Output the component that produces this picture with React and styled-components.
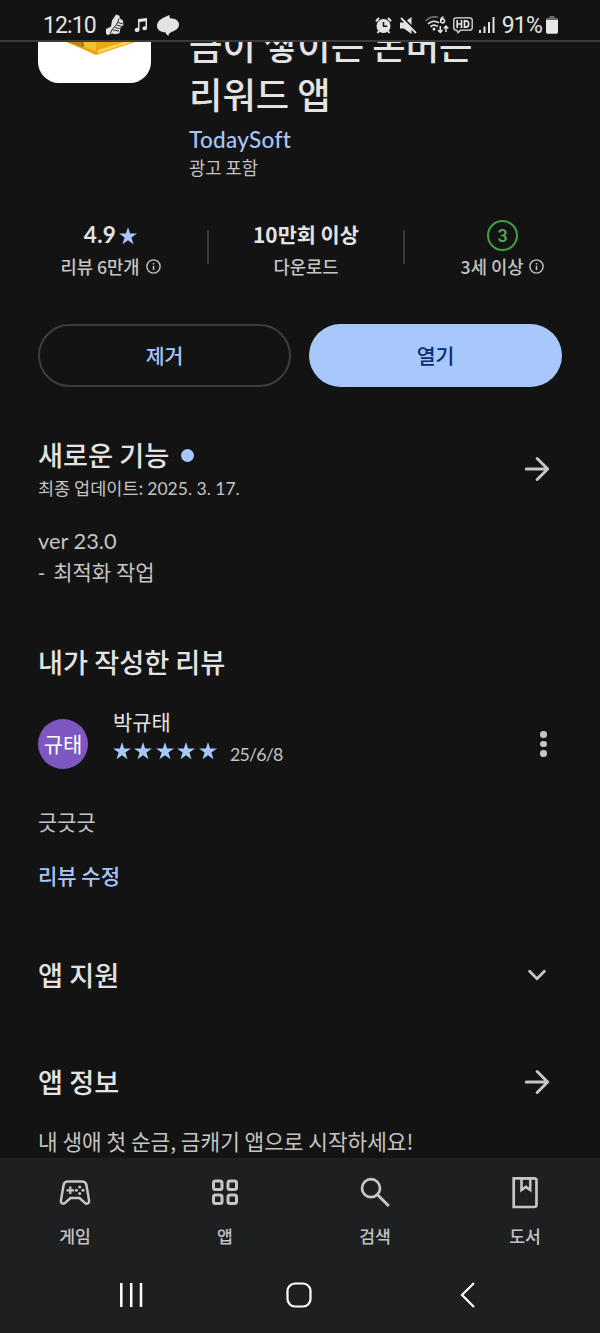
import React from 'react';
import styled, { createGlobalStyle } from 'styled-components';

const GlobalStyle = createGlobalStyle`
    * {
        box-sizing: border-box;
    }

    body {
        margin: 0;
        background: #131313;
    }
`;

const Screen = styled.div`
    display: flex;
    flex-direction: column;
    width: 600px;
    height: 1333px;
    overflow: hidden;
    background: #131313;
    color: #e3e3e3;
    font-family: 'Noto Sans CJK KR', sans-serif;
`;

const StatusBar = styled.header`
    display: flex;
    justify-content: space-between;
    flex: none;
    height: 42px;
    padding: 8px 42px 0 43px;
    border-bottom: 2px solid #3b3b3b;
    font-family: Roboto, sans-serif;
    font-size: 23px;
    line-height: 34px;
`;

const StatusGroup = styled.div`
    display: flex;
    align-items: center;
    height: 34px;
    gap: ${({ $gap }) => $gap || 0}px;

    svg {
        display: block;
        flex: none;
    }
`;

const StatusText = styled.span`
    padding-top: 1px;
    letter-spacing: ${({ $spacing }) => $spacing || 0}px;
    white-space: nowrap;
`;

const StatusItem = styled.span`
    display: flex;
    align-items: center;
    margin-left: ${({ $left }) => $left || 0}px;
`;

const Content = styled.main`
    display: flex;
    flex-direction: column;
    flex: 1;
    min-height: 0;
    padding: 0 38px;
    overflow: hidden;
`;

const Text = styled.div`
    color: ${({ $color }) => $color || '#c4c4c4'};
    font-size: ${({ $size }) => $size}px;
    font-weight: ${({ $weight }) => $weight || 400};
    line-height: ${({ $line }) => $line}px;
    white-space: nowrap;
`;

const Latin = styled.span`
    font-family: ${({ $font }) => $font || 'Lato'}, 'Noto Sans CJK KR', sans-serif;
    letter-spacing: ${({ $spacing }) => $spacing || 0}px;
`;

const AppHeader = styled.section`
    display: flex;
    align-items: flex-start;
    gap: 38px;
    height: 138px;
`;

const AppIcon = styled.div`
    flex: none;
    width: 113px;
    height: 41px;
    overflow: hidden;
    border-radius: 0 0 21px 21px;
    background: #fff;

    svg {
        display: block;
    }
`;

const AppTitle = styled.h1`
    margin: -22px 0 1px;
    font-size: 36.3px;
    font-weight: 500;
    line-height: 49px;
    white-space: nowrap;
`;

const Stats = styled.section`
    display: grid;
    grid-template-columns: 169px 2px 194px 2px 1fr;
    align-items: start;
    height: 144px;
    padding-top: 38px;
`;

const Stat = styled.div`
    display: flex;
    flex-direction: column;
    align-items: center;
    padding: 0 ${({ $right }) => $right || 0}px 0 ${({ $left }) => $left || 0}px;
`;

const Divider = styled.div`
    width: 2px;
    height: 34px;
    margin-top: 12px;
    background: #3a3c3b;
`;

const StatLine = styled.div`
    display: flex;
    align-items: center;
    justify-content: center;
    gap: ${({ $gap }) => $gap || 0}px;
    height: 32px;
`;

const StarSlot = styled.span`
    display: flex;
    margin-top: 3px;
`;

const AgeBadge = styled.div`
    width: 31px;
    height: 31px;
    margin-top: 2px;
    border: 2px solid #43a047;
    border-radius: 50%;
    color: #57ab5a;
    font: 500 18px/27px Roboto, sans-serif;
    text-align: center;
`;

const AgeLine = styled(StatLine)`
    height: 30px;
`;

const Actions = styled.section`
    display: grid;
    grid-template-columns: 253px 253px;
    gap: 18px;
    height: 63px;
`;

const ActionButton = styled.button`
    padding: 0 0 2px;
    border: ${({ $filled }) => ($filled ? '0' : '2px solid #3c3e3d')};
    border-radius: 32px;
    background: ${({ $filled }) => ($filled ? '#a8c7fa' : 'transparent')};
    color: ${({ $filled }) => ($filled ? '#062e6f' : '#a8c7fa')};
    font-family: inherit;
    font-size: 20.5px;
    font-weight: 500;
`;

const SectionHead = styled.div`
    display: flex;
    align-items: center;
    justify-content: space-between;
    height: ${({ $height }) => $height}px;
    margin-top: ${({ $top }) => $top || 0}px;
    padding-right: 12px;

    svg {
        flex: none;
    }
`;

const SectionTitle = styled.h2`
    margin: 0 0 2px;
    font-size: 27.2px;
    font-weight: 500;
    line-height: 38px;
    white-space: nowrap;
`;

const TitleRow = styled.div`
    display: flex;
    align-items: center;
    gap: 12px;
    height: 37px;
`;

const NewDot = styled.span`
    width: 13px;
    height: 13px;
    border-radius: 50%;
    background: #a8c7fa;
`;

const Notes = styled.div`
    height: 64px;
    margin-top: 22px;
`;

const Reviewer = styled.div`
    display: flex;
    align-items: center;
    height: 64px;
    margin-top: 30px;
`;

const Avatar = styled.div`
    width: 50px;
    height: 50px;
    border-radius: 50%;
    background: #7e57c2;
    color: #fff;
    font-size: 21px;
    line-height: 49px;
    text-align: center;
`;

const ReviewerInfo = styled.div`
    display: flex;
    flex-direction: column;
    flex: 1;
    margin-left: 25px;
    padding-bottom: 17px;
`;

const Rating = styled.div`
    display: flex;
    align-items: center;
    gap: 3.4px;
    height: 29px;
`;

const RatingDate = styled(Text)`
    margin: 5px 0 0 10px;
`;

const More = styled.div`
    display: flex;
    flex-direction: column;
    gap: 3px;
    margin-right: 15.5px;

    i {
        width: 6.6px;
        height: 6.6px;
        border-radius: 50%;
        background: #c4c7c5;
    }
`;

const BottomBar = styled.nav`
    flex: none;
    height: 175px;
    background: #1e1f20;
`;

const Tabs = styled.div`
    display: grid;
    grid-template-columns: repeat(4, 1fr);
    height: 100px;
`;

const Tab = styled.div`
    display: flex;
    flex-direction: column;
    align-items: center;
    padding-top: 16px;

    svg {
        display: block;
    }
`;

const SystemNav = styled.div`
    display: grid;
    grid-template-columns: 168px 174px 16px;
    height: 75px;
    padding: 24px 0 0 118px;
`;

const Star = () => (
    <svg width="18" height="18" viewBox="0 0 18 18" fill="#a8c7fa">
        <path d="M9 0l2.1 6.5H18l-5.600 4.100 2.100 6.700L9 13.200l-5.500 4.100 2.100-6.700L0 6.500h6.900z" />
    </svg>
);

const InfoIcon = () => (
    <svg width="15" height="15" viewBox="0 0 15 15" fill="none" stroke="#c4c4c4">
        <circle cx="7.5" cy="7.5" r="6.6" strokeWidth="1.4" />
        <path d="M7.5 6.7v4.2M7.5 4v1.5" strokeWidth="1.5" />
    </svg>
);

const ArrowIcon = () => (
    <svg width="26" height="26" viewBox="0 0 26 26" fill="none" stroke="#c4c7c5" strokeWidth="3" strokeLinecap="round" strokeLinejoin="round">
        <path d="M2.300 13h21.300M13.200 2.500L23.700 13 13.200 23.500" />
    </svg>
);

const ChevronIcon = () => (
    <svg width="26" height="26" viewBox="0 0 26 26" fill="none" stroke="#c4c7c5" strokeWidth="2.8" strokeLinecap="round" strokeLinejoin="round">
        <path d="M5.600 9.200l7.400 7.600 7.400-7.600" />
    </svg>
);

const ShoeIcon = () => (
    <svg width="18" height="22" viewBox="0 0 18 22">
        <path fill="#e3e3e3" d="M10 .5l3.500 1.200.3 2.800 3 1.700.7 4.800-3 2.500-1 5.800-4.500.9-2.500-.8L1.500 21 0 19.500V15l5-2.500 1-6z" />
        <path fill="none" stroke="#2a2a2a" strokeWidth="1" d="M13 4.500c-1 5-4 8-6.500 10.500L4 20M12 8.500l5 1.500M10.500 11l5 1.300M8.800 13.500l5 1.200M7 16l6 1" />
    </svg>
);

const MusicIcon = () => (
    <svg width="13" height="14" viewBox="0 0 13 14" fill="#e3e3e3">
        <path d="M4 1l9-1v10.200a2.300 2 0 1 1-1.500-1.800V3.300L5.500 4v7.800A2.400 2.100 0 1 1 4 10z" />
    </svg>
);

const BlobIcon = () => (
    <svg width="22" height="21" viewBox="0 0 22 21" fill="#e3e3e3">
        <path d="M12.800 0c-.4 1.400-.3 2.500.3 3.300C18.500 3.400 22 5.800 22 9.500c0 3.700-3 5.800-7 7.300-2 .7-3.300 2-3.500 3.900-2-.5-2.800-1.900-3-3.400C3.500 17.200 0 14.700 0 11 0 6.500 3.500 3.300 12.800 0z" />
    </svg>
);

const AlarmIcon = () => (
    <svg width="17" height="17" viewBox="0 0 17 17">
        <circle cx="8.500" cy="9" r="7" fill="#e3e3e3" />
        <path d="M1 4.200L4 1M13 1l3 3.200M4 14l-1.500 2M13 14l1.500 2" stroke="#e3e3e3" strokeWidth="2" />
        <path d="M8.500 5v4.300h3.700" fill="none" stroke="#131313" strokeWidth="1.500" />
    </svg>
);

const MuteIcon = () => (
    <svg width="17" height="17" viewBox="0 0 17 17">
        <path fill="#e3e3e3" d="M0 5.500h4L11.500 0v17L4 11.500H0z" />
        <path d="M2.200 0l15 15" stroke="#131313" strokeWidth="2" />
        <path d="M1 1l15 15" stroke="#e3e3e3" strokeWidth="1.800" />
    </svg>
);

const WifiIcon = () => (
    <svg width="24" height="18" viewBox="0 0 24 18" fill="none" strokeWidth="1.700">
        <path d="M.7 5C4.500.5 9 .3 13 1.200" stroke="#6b6b6b" />
        <path d="M3 8c3-3.300 7.500-3.500 11-1.200M5.500 10.800c2-2 5-2 7.300-.3" stroke="#e3e3e3" />
        <circle cx="9" cy="13" r="1.500" fill="#e3e3e3" />
        <path d="M18.500.9c-2 .4-2.800 2-2.800 4" stroke="#e3e3e3" strokeWidth="1.500" />
        <circle cx="17.600" cy="5" r="1.900" stroke="#e3e3e3" strokeWidth="1.500" />
        <path d="M15.300 10v6M13 14l2.300 2.500L17.600 14M21 16v-5.500M18.700 12.500L21 10l2.300 2.500" stroke="#e3e3e3" strokeWidth="1.500" />
    </svg>
);

const HdIcon = () => (
    <svg width="20" height="17" viewBox="0 0 20 17" fill="none" stroke="#e3e3e3">
        <path d="M3 .8h14a2.200 2.200 0 0 1 2.200 2.200v8a2.200 2.200 0 0 1-2.200 2.200H7.500L5 15.700l-1.300-2.500H3A2.200 2.200 0 0 1 .8 11V3A2.200 2.200 0 0 1 3 .8z" strokeWidth="1.300" />
        <path d="M4.200 3v8M8.500 3v8M4.200 7h4.300M11.500 3.800v6.400h1.200c2 0 3-1.200 3-3.200s-1-3.200-3-3.200z" strokeWidth="1.700" />
    </svg>
);

const SignalIcon = () => (
    <svg width="16" height="16" viewBox="0 0 16 16" fill="#e3e3e3">
        <path d="M0 13h2v3H0zM4.500 9.500h2V16h-2zM9 5h2v11H9zM13.500 0h2v16h-2z" />
    </svg>
);

const BatteryIcon = () => (
    <svg width="12" height="18" viewBox="0 0 12 18">
        <path fill="#6b6b6b" d="M3.500 0h5v2H12v4H0V2h3.500z" />
        <path fill="#e8e8e8" d="M0 4h12v12a1.700 1.700 0 0 1-1.700 1.700H1.700A1.700 1.700 0 0 1 0 16z" />
    </svg>
);

const GoldIcon = () => (
    <svg width="113" height="14" viewBox="0 0 113 14">
        <path fill="#f0a512" d="M29 0h68L58 13z" />
        <path fill="#c98212" d="M29 0h15l2 5-5-.5z" />
        <path fill="#f7bd35" d="M46 0h12v9L46 5z" />
        <path fill="#ffd95e" d="M60 8L86 0h8L60 11z" />
        <path fill="none" stroke="#8f5a08" strokeWidth="1.200" d="M44 0l1.500 4.500" />
    </svg>
);

const GameIcon = () => (
    <svg width="34" height="36" viewBox="0 0 34 36" fill="none" stroke="#c4c7c5" strokeWidth="2.500" strokeLinejoin="round">
        <path d="M10 7.500h14c2.300 0 4 1.300 4.400 3.500l2.700 15.600c.4 2.700-2.400 4-4.200 2.300L21.500 24h-9l-5.400 4.900c-1.800 1.700-4.600.4-4.200-2.300L5.600 11C6 8.800 7.700 7.500 10 7.500z" />
        <path d="M12.300 12.500v7.600M8.500 16.300h7.600" strokeWidth="2.200" />
        <g fill="#c4c7c5" stroke="none">
            <circle cx="21.700" cy="13" r="1.500" />
            <circle cx="21.700" cy="19.600" r="1.500" />
            <circle cx="18.400" cy="16.300" r="1.500" />
            <circle cx="25" cy="16.300" r="1.500" />
        </g>
    </svg>
);

const AppsIcon = () => (
    <svg width="34" height="36" viewBox="0 0 34 36" fill="none" stroke="#c4c7c5" strokeWidth="3">
        <rect x="5.500" y="7" width="8.500" height="8.500" rx="2" />
        <rect x="20" y="7" width="8.500" height="8.500" rx="2" />
        <rect x="5.500" y="21" width="8.500" height="8.500" rx="2" />
        <rect x="20" y="21" width="8.500" height="8.500" rx="2" />
    </svg>
);

const SearchIcon = () => (
    <svg width="34" height="36" viewBox="0 0 34 36" fill="none" stroke="#c4c7c5" strokeWidth="2.700">
        <circle cx="13" cy="14.200" r="9" />
        <path d="M19.500 20.700l11.300 11.300" strokeWidth="3" />
    </svg>
);

const BookIcon = () => (
    <svg width="34" height="36" viewBox="0 0 34 36" fill="none" stroke="#c4c7c5" strokeWidth="2.700">
        <path d="M5.700 4.300h20.600a2.200 2.200 0 0 1 2.200 2.200v24.300a2.200 2.200 0 0 1-2.200 2.200H5.700z" />
        <path fill="#c4c7c5" stroke="none" fillRule="evenodd" d="M12.200 4h11.300v14.500l-5.600-4-5.700 4zM14.800 5.500v8l3.100-2.300 3.100 2.300v-8z" />
    </svg>
);

const RecentsIcon = () => (
    <svg width="26" height="26" viewBox="0 0 26 26" stroke="#fff" strokeWidth="2.500">
        <path d="M3.300 1v24M13.200 1v24M23 1v24" />
    </svg>
);

const HomeIcon = () => (
    <svg width="26" height="26" viewBox="0 0 26 26" fill="none" stroke="#fff" strokeWidth="2.200">
        <rect x="1.500" y="1.500" width="23" height="23" rx="7.500" />
    </svg>
);

const BackIcon = () => (
    <svg width="16" height="26" viewBox="0 0 16 26" fill="none" stroke="#fff" strokeWidth="2.200">
        <path d="M14 1L2 13l12 12" />
    </svg>
);

const tabs = [
    { label: '게임', Icon: GameIcon },
    { label: '앱', Icon: AppsIcon },
    { label: '검색', Icon: SearchIcon },
    { label: '도서', Icon: BookIcon },
];

export default function App() {
    return (
        <Screen>
            <GlobalStyle />
            <StatusBar>
                <StatusGroup $gap={10}>
                    <StatusText $spacing={-0.9}>12:10</StatusText>
                    <ShoeIcon />
                    <MusicIcon />
                    <BlobIcon />
                </StatusGroup>
                <StatusGroup>
                    <AlarmIcon />
                    <StatusItem $left={8}>
                        <MuteIcon />
                    </StatusItem>
                    <StatusItem $left={8}>
                        <WifiIcon />
                    </StatusItem>
                    <StatusItem $left={4}>
                        <HdIcon />
                    </StatusItem>
                    <StatusItem $left={6}>
                        <SignalIcon />
                    </StatusItem>
                    <StatusItem $left={7}>
                        <StatusText $spacing={-0.8}>91%</StatusText>
                    </StatusItem>
                    <StatusItem $left={4}>
                        <BatteryIcon />
                    </StatusItem>
                </StatusGroup>
            </StatusBar>

            <Content>
                <AppHeader>
                    <AppIcon>
                        <GoldIcon />
                    </AppIcon>
                    <div>
                        <AppTitle>
                            금이 쌓이는 돈버는
                            <br />
                            리워드 앱
                        </AppTitle>
                        <Text $size={22.5} $line={38} $weight={500} $color="#a8c7fa">
                            <Latin $spacing={0.3}>TodaySoft</Latin>
                        </Text>
                        <Text $size={17.7} $line={17}>광고 포함</Text>
                    </div>
                </AppHeader>

                <Stats>
                    <Stat $right={24}>
                        <StatLine $gap={3}>
                            <Text $size={22.5} $line={32} $weight={700} $color="#e3e3e3">
                                <Latin $spacing={0.3}>4.9</Latin>
                            </Text>
                            <StarSlot>
                                <Star />
                            </StarSlot>
                        </StatLine>
                        <StatLine $gap={6}>
                            <Text $size={17.7} $line={32} $weight={500}>리뷰 6만개</Text>
                            <InfoIcon />
                        </StatLine>
                    </Stat>
                    <Divider />
                    <Stat>
                        <StatLine>
                            <Text $size={20.8} $line={32} $weight={700} $color="#e3e3e3">10만회 이상</Text>
                        </StatLine>
                        <StatLine>
                            <Text $size={17.7} $line={32} $weight={500}>다운로드</Text>
                        </StatLine>
                    </Stat>
                    <Divider />
                    <Stat $left={38}>
                        <AgeBadge>3</AgeBadge>
                        <AgeLine $gap={6}>
                            <Text $size={17.7} $line={32} $weight={500}>3세 이상</Text>
                            <InfoIcon />
                        </AgeLine>
                    </Stat>
                </Stats>

                <Actions>
                    <ActionButton>제거</ActionButton>
                    <ActionButton $filled>열기</ActionButton>
                </Actions>

                <SectionHead $top={49} $height={66}>
                    <div>
                        <TitleRow>
                            <SectionTitle>새로운 기능</SectionTitle>
                            <NewDot />
                        </TitleRow>
                        <Text $size={17.5} $line={27}>
                            최종 업데이트: <Latin>2025. 3. 17.</Latin>
                        </Text>
                    </div>
                    <ArrowIcon />
                </SectionHead>
                <Notes>
                    <Text $size={21.8} $line={31}>
                        <Latin>ver 23.0</Latin>
                    </Text>
                    <Text $size={21} $line={31}>
                        <Latin $font="'Liberation Sans'" $spacing={1.2}>- </Latin>
                        최적화 작업
                    </Text>
                </Notes>

                <SectionHead $top={54} $height={40}>
                    <SectionTitle>내가 작성한 리뷰</SectionTitle>
                </SectionHead>
                <Reviewer>
                    <Avatar>규태</Avatar>
                    <ReviewerInfo>
                        <Text $size={20.9} $line={30} $color="#e3e3e3">박규태</Text>
                        <Rating>
                            <Star />
                            <Star />
                            <Star />
                            <Star />
                            <Star />
                            <RatingDate $size={17.8} $line={28}>
                                <Latin $spacing={-0.8}>25/6/8</Latin>
                            </RatingDate>
                        </Rating>
                    </ReviewerInfo>
                    <More>
                        <i />
                        <i />
                        <i />
                    </More>
                </Reviewer>
                <SectionHead $top={30} $height={30}>
                    <Text $size={20.9} $line={30}>긋긋긋</Text>
                </SectionHead>
                <SectionHead $top={24} $height={30}>
                    <Text $size={21} $line={30} $weight={500} $color="#a8c7fa">리뷰 수정</Text>
                </SectionHead>

                <SectionHead $top={65} $height={40}>
                    <SectionTitle>앱 지원</SectionTitle>
                    <ChevronIcon />
                </SectionHead>
                <SectionHead $top={67} $height={40}>
                    <SectionTitle>앱 정보</SectionTitle>
                    <ArrowIcon />
                </SectionHead>
                <SectionHead $top={24} $height={30}>
                    <Text $size={21.35} $line={30}>내 생애 첫 순금, 금캐기 앱으로 시작하세요!</Text>
                </SectionHead>
            </Content>

            <BottomBar>
                <Tabs>
                    {tabs.map(({ label, Icon }) => (
                        <Tab key={label}>
                            <Icon />
                            <Text $size={17.2} $line={51} $weight={500}>{label}</Text>
                        </Tab>
                    ))}
                </Tabs>
                <SystemNav>
                    <RecentsIcon />
                    <HomeIcon />
                    <BackIcon />
                </SystemNav>
            </BottomBar>
        </Screen>
    );
}
